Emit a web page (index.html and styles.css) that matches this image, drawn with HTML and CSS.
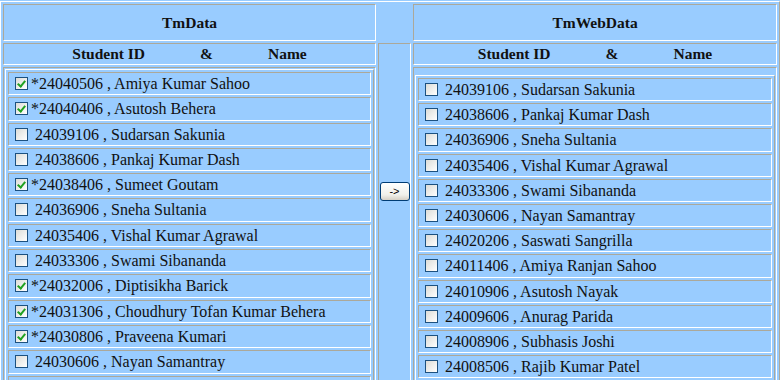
FILE: index.html
```html
<!DOCTYPE html>
<html lang="en">
<head>
    <meta charset="UTF-8">
    <title>Student Transfer</title>
    <link rel="stylesheet" href="styles.css">
</head>
<body>

<table class="layout">
    <tr class="title">
        <td class="left">TmData</td>
        <td class="mid blank"></td>
        <td class="right">TmWebData</td>
    </tr>
    <tr class="subtitle">
        <td>Student ID<span class="amp">&amp;</span>Name</td>
        <td class="move" rowspan="2"><button type="button" class="btn">-&gt;</button></td>
        <td>Student ID<span class="amp">&amp;</span>Name</td>
    </tr>
    <tr class="lists">
        <td>
            <table class="list">
                <tr><td><input type="checkbox" class="cb" checked>*24040506 , Amiya Kumar Sahoo</td></tr>
                <tr><td><input type="checkbox" class="cb" checked>*24040406 , Asutosh Behera</td></tr>
                <tr><td><input type="checkbox" class="cb">&nbsp;24039106 , Sudarsan Sakunia</td></tr>
                <tr><td><input type="checkbox" class="cb">&nbsp;24038606 , Pankaj Kumar Dash</td></tr>
                <tr><td><input type="checkbox" class="cb" checked>*24038406 , Sumeet Goutam</td></tr>
                <tr><td><input type="checkbox" class="cb">&nbsp;24036906 , Sneha Sultania</td></tr>
                <tr><td><input type="checkbox" class="cb">&nbsp;24035406 , Vishal Kumar Agrawal</td></tr>
                <tr><td><input type="checkbox" class="cb">&nbsp;24033306 , Swami Sibananda</td></tr>
                <tr><td><input type="checkbox" class="cb" checked>*24032006 , Diptisikha Barick</td></tr>
                <tr><td><input type="checkbox" class="cb" checked>*24031306 , Choudhury Tofan Kumar Behera</td></tr>
                <tr><td><input type="checkbox" class="cb" checked>*24030806 , Praveena Kumari</td></tr>
                <tr><td><input type="checkbox" class="cb">&nbsp;24030606 , Nayan Samantray</td></tr>
                <tr><td class="more"></td></tr>
            </table>
        </td>
        <td class="right-list">
            <table class="list">
                <tr><td><input type="checkbox" class="cb">&nbsp;24039106 , Sudarsan Sakunia</td></tr>
                <tr><td><input type="checkbox" class="cb">&nbsp;24038606 , Pankaj Kumar Dash</td></tr>
                <tr><td><input type="checkbox" class="cb">&nbsp;24036906 , Sneha Sultania</td></tr>
                <tr><td><input type="checkbox" class="cb">&nbsp;24035406 , Vishal Kumar Agrawal</td></tr>
                <tr><td><input type="checkbox" class="cb">&nbsp;24033306 , Swami Sibananda</td></tr>
                <tr><td><input type="checkbox" class="cb">&nbsp;24030606 , Nayan Samantray</td></tr>
                <tr><td><input type="checkbox" class="cb">&nbsp;24020206 , Saswati Sangrilla</td></tr>
                <tr><td><input type="checkbox" class="cb">&nbsp;24011406 , Amiya Ranjan Sahoo</td></tr>
                <tr><td><input type="checkbox" class="cb">&nbsp;24010906 , Asutosh Nayak</td></tr>
                <tr><td><input type="checkbox" class="cb">&nbsp;24009606 , Anurag Parida</td></tr>
                <tr><td><input type="checkbox" class="cb">&nbsp;24008906 , Subhasis Joshi</td></tr>
                <tr><td><input type="checkbox" class="cb">&nbsp;24008506 , Rajib Kumar Patel</td></tr>
                <tr><td class="more"></td></tr>
            </table>
        </td>
    </tr>
</table>

</body>
</html>
```

FILE: styles.css
```css
body {
    margin: 0;
    padding-top: 1px;
    background-color: #99ccff;
    font-family: "Liberation Serif", "Times New Roman", serif;
    font-size: 16px;
    color: #111;
    overflow: hidden;
}
/* outer table, border=1 look: outset table, inset cells */
.layout {
    width: 780px;
    table-layout: fixed;
    border-collapse: separate;
    border-spacing: 2px;
    border: 1px solid;
    border-color: #fff #aca899 #aca899 #fff;
}
.layout > tbody > tr > td {
    border: 1px solid;
    border-color: #aca899 #fff #fff #aca899;
    padding: 0;
    text-align: center;
}
.layout > tbody > tr > td.blank {
    border: none;
}
.left {
    width: 371px;
}
.mid {
    width: 33px;
}
.title td {
    height: 35px;
    font-size: 15.5px;
    font-weight: bold;
}
.subtitle td {
    height: 20px;
    font-size: 15.5px;
    font-weight: bold;
}
.amp {
    margin: 0 55px;
}
.layout > tbody > tr > td.move {
    vertical-align: top;
    padding-top: 137px;
}
.btn {
    width: 30px;
    height: 19px;
    padding: 0;
    border: 1px solid #003c74;
    border-radius: 3px;
    background: linear-gradient(#ffffff, #f0f0ea 70%, #d6d0c5);
    font-family: "Liberation Sans", Arial, sans-serif;
    font-size: 11px;
    color: #000;
}
.lists > td {
    vertical-align: top;
}
.layout > tbody > tr.lists > td {
    padding: 1px;
}
.layout > tbody > tr.lists > td.right-list {
    padding-top: 7px;
}
/* nested list of students */
.list {
    width: 100%;
    border-collapse: separate;
    border-spacing: 2px;
    border: 1px solid;
    border-color: #fff #aca899 #aca899 #fff;
}
.list td {
    border: 1px solid;
    border-color: #aca899 #fff #fff #aca899;
    padding: 1px 2px;
    height: 19px;
    line-height: 19.3px;
    text-align: left;
    white-space: nowrap;
}
.right-list .list td {
    line-height: 19.2px;
}
.cb {
    appearance: none;
    -webkit-appearance: none;
    box-sizing: border-box;
    width: 13px;
    height: 13px;
    margin: 0 3px 0 4px;
    border: 1px solid #1c5180;
    background: linear-gradient(135deg, #dcdcd7, #ffffff);
    vertical-align: -1px;
}
.cb:checked::after {
    content: "";
    display: block;
    width: 3px;
    height: 6px;
    margin: 1px 0 0 3px;
    border: solid #21a121;
    border-width: 0 2px 2px 0;
    transform: rotate(40deg);
}
```
